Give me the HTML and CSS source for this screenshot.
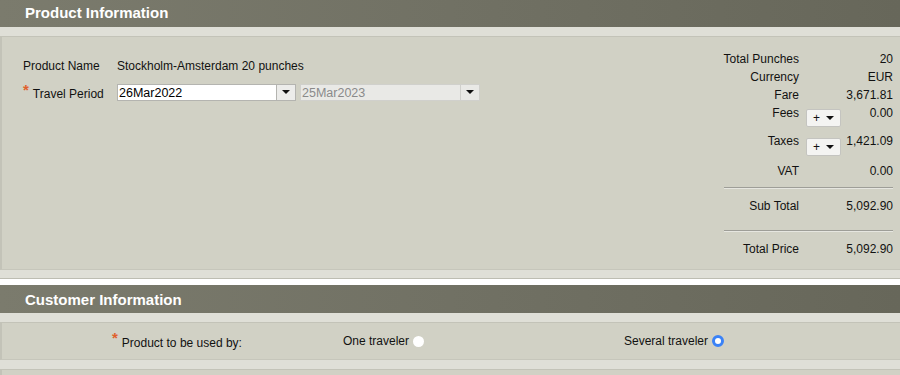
FILE: index.html
```html
<!DOCTYPE html>
<html>
<head>
<meta charset="utf-8">
<link rel="stylesheet" href="styles.css">
</head>
<body>
<div class="section-header">Product Information</div>
<div class="strip"></div>
<div class="panel product-panel">
  <div class="form">
    <div class="form-row">
      <span class="form-label">Product Name</span>
      <span class="form-value">Stockholm-Amsterdam 20 punches</span>
    </div>
    <div class="form-row">
      <span class="form-label"><span class="req">*</span>Travel Period</span>
      <div class="combo">
        <span class="combo-input">26Mar2022</span>
        <span class="combo-btn"><span class="tri"></span></span>
      </div>
      <div class="combo disabled">
        <span class="combo-input">25Mar2023</span>
        <span class="combo-btn"><span class="tri"></span></span>
      </div>
    </div>
  </div>
  <div class="summary">
    <div class="sum-row"><span class="sum-label">Total Punches</span><span class="sum-slot"></span><span class="sum-value">20</span></div>
    <div class="sum-row"><span class="sum-label">Currency</span><span class="sum-slot"></span><span class="sum-value">EUR</span></div>
    <div class="sum-row"><span class="sum-label">Fare</span><span class="sum-slot"></span><span class="sum-value">3,671.81</span></div>
    <div class="sum-row fees"><span class="sum-label">Fees</span><span class="sum-slot"><span class="pm-btn">+ <span class="tri"></span></span></span><span class="sum-value">0.00</span></div>
    <div class="sum-row taxes"><span class="sum-label">Taxes</span><span class="sum-slot"><span class="pm-btn">+ <span class="tri"></span></span></span><span class="sum-value">1,421.09</span></div>
    <div class="sum-row"><span class="sum-label">VAT</span><span class="sum-slot"></span><span class="sum-value">0.00</span></div>
    <div class="sum-line first"></div>
    <div class="sum-row"><span class="sum-label">Sub Total</span><span class="sum-slot"></span><span class="sum-value">5,092.90</span></div>
    <div class="sum-line second"></div>
    <div class="sum-row"><span class="sum-label">Total Price</span><span class="sum-slot"></span><span class="sum-value">5,092.90</span></div>
  </div>
</div>
<div class="strip bottom"></div>
<div class="gap-white"></div>
<div class="section-header tall">Customer Information</div>
<div class="strip"></div>
<div class="panel customer-panel">
  <span class="cust-label"><span class="req">*</span>Product to be used by:</span>
  <span class="cust-opt first">One traveler <span class="radio"></span></span>
  <span class="cust-opt">Several traveler <span class="radio checked"></span></span>
</div>
<div class="strip"></div>
<div class="panel last-panel"></div>
</body>
</html>
```
FILE: styles.css
```css
html, body {
  margin: 0;
  padding: 0;
  background: #dfdfd7;
  font-family: "Liberation Sans", Arial, sans-serif;
  font-size: 12px;
  color: #111;
}
.section-header {
  height: 27px;
  line-height: 26px;
  padding-left: 25px;
  background: linear-gradient(to right, #7b7b6d, #717164 50%, #67675a);
  color: #fff;
  font-weight: bold;
  font-size: 15px;
}
.section-header.tall {
  height: 28px;
  line-height: 29px;
}
.strip {
  height: 9px;
  background: #dfdfd7;
}
.strip.bottom {
  height: 8px;
  border-bottom: 1px solid #bdbdb2;
}
.gap-white {
  height: 6px;
  background: #fff;
}
.panel {
  background: #d1d1c5;
  border-top: 1px solid #c3c3b8;
  border-left: 2px solid #c3c3b8;
  border-bottom: 1px solid #c6c6bb;
}
.product-panel {
  height: 232px;
  display: flex;
  justify-content: space-between;
}
.form {
  padding: 20px 0 0 21px;
}
.form-row {
  display: flex;
  align-items: center;
  height: 18px;
  margin-bottom: 8px;
}
.form-label {
  width: 94px;
  white-space: nowrap;
}
.form-label .req {
  color: #e0602c;
  font-size: 15px;
  font-weight: bold;
  margin-right: 4px;
  position: relative;
  top: -3px;
}
.combo {
  display: flex;
  height: 17px;
  margin-right: 4px;
}
.combo-input {
  width: 157px;
  height: 15px;
  line-height: 16px;
  padding-left: 1px;
  background: #fff;
  border: 1px solid #b4b4b0;
  border-right: none;
  font-size: 12.5px;
  color: #000;
}
.combo-btn {
  width: 18px;
  height: 15px;
  background: #ececea;
  border: 1px solid #b4b4b0;
  display: flex;
  align-items: center;
  justify-content: center;
}
.combo.disabled .combo-input {
  background: #e9e9e6;
  color: #8a8a8a;
  border-color: #d0d0cc;
  width: 158px;
}
.combo.disabled .combo-btn {
  border-color: #d0d0cc;
  background: #e9e9e6;
}
.tri {
  display: inline-block;
  width: 0;
  height: 0;
  border-left: 4px solid transparent;
  border-right: 4px solid transparent;
  border-top: 4px solid #111;
}
.summary {
  width: 200px;
  margin-right: 7px;
  padding-top: 13px;
}
.sum-row {
  display: flex;
  height: 18px;
  line-height: 18px;
  white-space: nowrap;
}
.sum-row.fees { height: 28px; }
.sum-row.taxes { height: 30px; }
.sum-label {
  width: 106px;
  text-align: right;
}
.sum-slot {
  width: 42px;
  padding-left: 7px;
  box-sizing: border-box;
}
.sum-value {
  flex: 1;
  text-align: right;
}
.pm-btn {
  display: flex;
  align-items: center;
  justify-content: center;
  gap: 6px;
  width: 35px;
  height: 18px;
  margin-top: 5px;
  box-sizing: border-box;
  background: #f4f4f2;
  border: 1px solid #c4c4c0;
  border-radius: 2px;
  font-size: 12px;
  line-height: 18px;
}
.sum-row.taxes .pm-btn { margin-top: 6px; }
.sum-line {
  height: 0;
  margin-left: 31px;
  border-top: 1px solid #9e9e98;
  border-bottom: 1px solid #e6e6e0;
}
.sum-line.first { margin-top: 7px; margin-bottom: 8px; }
.sum-line.second { margin-top: 15px; margin-bottom: 8px; }
.customer-panel {
  height: 36px;
  display: flex;
  align-items: center;
  padding-left: 110px;
}
.cust-label {
  width: 231px;
  white-space: nowrap;
}
.cust-label .req {
  color: #e0602c;
  font-size: 15px;
  font-weight: bold;
  margin-right: 4px;
  position: relative;
  top: -4px;
}
.cust-opt {
  display: flex;
  align-items: center;
  white-space: nowrap;
}
.cust-opt.first {
  width: 281px;
}
.radio {
  display: inline-block;
  width: 11px;
  height: 11px;
  border-radius: 50%;
  background: #fff;
  margin-left: 4px;
  box-sizing: border-box;
}
.radio.checked {
  background: #fff;
  border: 3px solid #3a82f7;
  width: 12px;
  height: 12px;
}
.last-panel {
  height: 10px;
  border-bottom: none;
}
```
